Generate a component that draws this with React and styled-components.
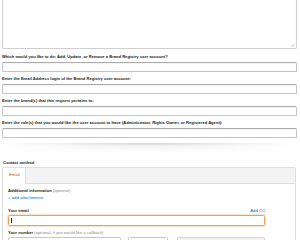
import React from 'react';
import styled, { createGlobalStyle } from 'styled-components';

const Global = createGlobalStyle`
  html, body { margin: 0; padding: 0; background: #fff; }
  body { font-family: "Liberation Sans", Arial, sans-serif; color: #111; overflow: hidden; }
`;

const Page = styled.div`
  width: 300px;
  height: 240px;
  overflow: hidden;
  box-sizing: border-box;
  padding: 0 3px 0 2px;
`;

const Form = styled.div`
  margin-top: -20px;
  display: flex;
  flex-direction: column;
`;

const TextArea = styled.div`
  position: relative;
  height: 69px;
  box-sizing: border-box;
  border: 1px solid #cfcfcf;
  border-top-color: #b5b5b5;
  border-radius: 2px;
  box-shadow: inset 0 1px 2px rgba(0, 0, 0, 0.06);
`;

const Grip = styled.svg`
  position: absolute;
  right: 1px;
  bottom: 1px;
`;

const Field = styled.div`
  display: flex;
  flex-direction: column;
  margin-top: ${(p) => (p.$first ? '5px' : '4px')};
`;

const Label = styled.div`
  font-size: 4.1px;
  font-weight: 700;
  line-height: 6px;
  margin-bottom: 2px;
  white-space: nowrap;
  color: #222;
`;

const Input = styled.div`
  height: 10px;
  box-sizing: border-box;
  border: 1px solid #c4c4c4;
  border-top-color: #ababab;
  border-radius: 1.5px;
  box-shadow: inset 0 1px 1px rgba(0, 0, 0, 0.05);
  background: #fff;
`;

const Divider = styled.div`
  position: relative;
  margin-top: 5px;
  height: 10px;
  background: linear-gradient(to bottom, rgba(0, 0, 0, 0.16), rgba(0, 0, 0, 0.05) 3px, rgba(0, 0, 0, 0));
  &::after {
    content: '';
    position: absolute;
    inset: 0;
    background: linear-gradient(to right, #fff, rgba(255, 255, 255, 0) 45%, rgba(255, 255, 255, 0) 55%, #fff);
  }
`;

const SectionTitle = styled.div`
  margin-top: 7px;
  font-size: 4.1px;
  font-weight: 700;
  line-height: 6px;
  padding-left: 1px;
  color: #222;
`;

const Panel = styled.div`
  margin-top: 1px;
  border: 1px solid #dddddd;
  border-radius: 2px;
  margin-right: 1px;
  height: 90px;
`;

const TabBar = styled.div`
  display: flex;
  height: 15px;
  background: #f3f3f3;
  border-bottom: 1px solid #dddddd;
`;

const Tab = styled.div`
  width: 23px;
  height: 16px;
  box-sizing: border-box;
  background: #fff;
  border-right: 1px solid #dddddd;
  color: #c45500;
  font-size: 4.3px;
  line-height: 14px;
  padding-left: 6px;
`;

const Body = styled.div`
  padding: 4px 30px 0 5px;
  display: flex;
  flex-direction: column;
`;

const InfoLine = styled.div`
  font-size: 4.1px;
  line-height: 6px;
  font-weight: 700;
  white-space: nowrap;
  color: #222;
`;

const Muted = styled.span`
  font-weight: 400;
  color: #8a8a8a;
  font-size: 4.2px;
`;

const Link = styled.div`
  font-size: 4.3px;
  line-height: 6px;
  color: #0066c0;
  margin-top: 1px;
`;

const LabelRow = styled.div`
  display: flex;
  justify-content: space-between;
  align-items: flex-end;
  margin-top: ${(p) => p.$gap || '7px'};
  margin-bottom: 1px;
`;

const SmallLink = styled.span`
  font-size: 4.2px;
  color: #0066c0;
  line-height: 6px;
`;

const EmailInput = styled.div`
  position: relative;
  height: 11px;
  box-sizing: border-box;
  border: 1px solid #e9a25a;
  border-radius: 1.5px;
  box-shadow: 0 0 1px 0.5px rgba(240, 170, 100, 0.35);
  display: flex;
  align-items: center;
  padding-left: 2px;
`;

const Caret = styled.div`
  width: 1px;
  height: 5px;
  background: #222;
`;

const NumberRow = styled.div`
  display: flex;
  gap: 7px;
`;

const NumInput = styled.div`
  width: ${(p) => p.$w}px;
  height: 10px;
  box-sizing: border-box;
  border: 1px solid ${(p) => (p.$gray ? '#d5d5d5' : '#c4c4c4')};
  border-radius: 1.5px;
  background: ${(p) => (p.$gray ? '#f0f1f3' : '#fff')};
  margin-left: ${(p) => p.$ml || 0}px;
`;

const fields = [
  'Which would you like to do: Add, Update, or Remove a Brand Registry user account?',
  'Enter the Email Address login of the Brand Registry user account:',
  'Enter the brand(s) that this request pertains to:',
  'Enter the role(s) that you would like the user account to have (Administrator, Rights Owner, or Registered Agent):',
];

export default function App() {
  return (
    <Page>
      <Global />
      <Form>
        <TextArea>
          <Grip width="5" height="5" viewBox="0 0 5 5">
            <path d="M4.5 1 L1 4.5 M4.5 3 L3 4.5" stroke="#b0b0b0" strokeWidth="0.6" />
          </Grip>
        </TextArea>
        {fields.map((f, i) => (
          <Field key={i} $first={i === 0}>
            <Label>{f}</Label>
            <Input />
          </Field>
        ))}
        <Divider />
        <SectionTitle>Contact method</SectionTitle>
        <Panel>
          <TabBar>
            <Tab>Email</Tab>
          </TabBar>
          <Body>
            <InfoLine>
              Additional information <Muted>(optional)</Muted>
            </InfoLine>
            <Link>+ add attachments</Link>
            <LabelRow $gap="7px">
              <InfoLine>Your email</InfoLine>
              <SmallLink>Add CC</SmallLink>
            </LabelRow>
            <EmailInput>
              <Caret />
            </EmailInput>
            <LabelRow $gap="4px">
              <InfoLine>
                Your number <Muted>(optional, if you would like a callback)</Muted>
              </InfoLine>
            </LabelRow>
            <NumberRow>
              <NumInput $w={113} />
              <NumInput $w={40} />
              <NumInput $w={88} $gray $ml={2} />
            </NumberRow>
          </Body>
        </Panel>
      </Form>
    </Page>
  );
}
